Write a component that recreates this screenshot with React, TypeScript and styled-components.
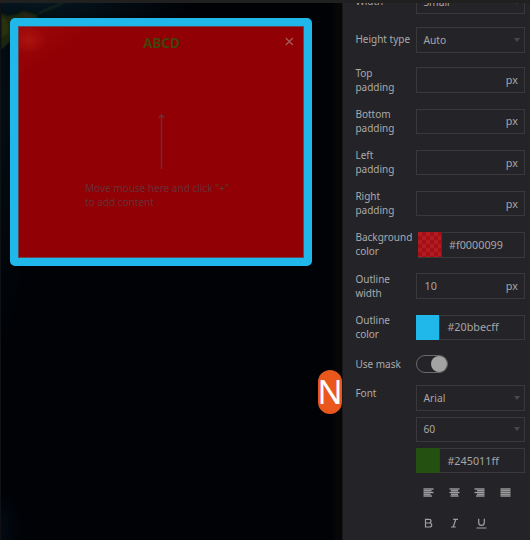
import React from "react";
import styled, { createGlobalStyle } from "styled-components";

const GlobalStyle = createGlobalStyle`
  * { box-sizing: border-box; }
  body { margin: 0; background: #000206; }
`;

const Editor = styled.div`
  width: 530px;
  height: 540px;
  overflow: hidden;
  display: grid;
  grid-template: 3px 537px / 342px 188px;
  font-family: "Noto Sans", sans-serif;
  color: #a3a3a5;
`;

const TopBar = styled.div`
  grid-column: 1 / 3;
  background: #202021;
  z-index: 1;
`;

const Stage = styled.main`
  position: relative;
  isolation: isolate;
  border-left: 1px solid #101115;
  padding: 15px 0 0 9px;
  background:
    linear-gradient(90deg, transparent 331px, #070707 336px),
    radial-gradient(ellipse 150px 32px at 40px 0, #061620, transparent),
    radial-gradient(ellipse 30px 240px at 0 100px, #030e15, transparent),
    radial-gradient(ellipse 20px 35px at 0 525px, #030b13, transparent),
    #000206;
`;

const Terrain = styled.svg`
  position: absolute;
  inset: 0 auto auto 0;
  z-index: -1;
`;

const Popup = styled.section`
  width: 302px;
  height: 248px;
  border: 8px solid #20b8eb;
  border-radius: 5px;
  padding: 8px 9px 0;
  background:
    radial-gradient(ellipse 18px 14px at 11px 14px, rgba(176, 22, 18, 0.8), transparent),
    linear-gradient(145deg, #9d0809, rgba(157, 8, 9, 0) 48px),
    #900004;
  box-shadow: inset 0 0 0 1px #654957;
  display: flex;
  flex-direction: column;
`;

const PopupHeader = styled.header`
  display: grid;
  grid-template-columns: 12px 1fr 12px;
  align-items: center;
  height: 14px;
`;

const PopupTitle = styled.h1`
  grid-column: 2;
  margin: 2px 0 0 1px;
  font-size: 13.3px;
  line-height: 14px;
  font-weight: 700;
  text-align: center;
  color: #46420b;
`;

const DropHint = styled.div`
  display: flex;
  flex-direction: column;
  padding: 66px 0 0 58px;
  color: #683038;
  font-size: 10px;
  line-height: 14px;

  svg { margin: 0 0 12px 71.5px; }
`;

const Badge = styled.div`
  position: absolute;
  left: 317px;
  top: 367px;
  width: 24px;
  height: 44px;
  border-radius: 12px;
  background: #ea571c;
  color: #fff;
  font-size: 33px;
  line-height: 43px;
  display: flex;
  justify-content: center;
`;

const Sidebar = styled.aside`
  background: #242327;
  border-left: 1px solid #19191c;
  padding-left: 12.4px;
  overflow: hidden;
`;

const Settings = styled.div`
  margin-top: -14.2px;
  display: flex;
  flex-direction: column;
  gap: 13px;
`;

const Row = styled.div<{ $height?: number; $top?: boolean }>`
  height: ${(p) => p.$height ?? 28.2}px;
  display: grid;
  grid-template-columns: 61px 108.6px;
  align-items: ${(p) => (p.$top ? "start" : "center")};
`;

const Label = styled.label<{ $nudge?: number }>`
  font-size: 10px;
  line-height: 14px;
  padding-top: ${(p) => p.$nudge ?? 0}px;
  padding-bottom: ${(p) => (p.$nudge ? 0 : 1.2)}px;
  color: #aaaaac;
`;

const Field = styled.div<{ $inset?: number }>`
  height: 25.4px;
  margin-left: ${(p) => p.$inset ?? 0}px;
  border: 1px solid #39393b;
  display: flex;
  align-items: center;
  padding: 0 6px;
  font-size: 10.8px;
  line-height: 16px;
  color: #a6a6a8;
`;

const Select = styled(Field)`
  font-size: 10.3px;
`;

const Unit = styled.span`
  margin-left: auto;
`;

const Chevron = styled.span`
  width: 0;
  height: 0;
  margin: 0 -2.5px 0 auto;
  border: 3.5px solid transparent;
  border-top: 4px solid #48484a;
  border-bottom: 0;
`;

const ColorField = styled(Field)`
  padding-left: 0;
  gap: 7px;
`;

const Swatch = styled.span<{ $color: string; $checked?: boolean }>`
  width: 24px;
  height: 25px;
  margin-left: -1px;
  border-right: 1px solid #39393b;
  background: ${(p) =>
    p.$checked
      ? "repeating-conic-gradient(#a30f14 0 25%, #b01c21 0 50%) 0 0 / 8px 8px"
      : p.$color};
`;

const Toggle = styled.span`
  width: 32px;
  height: 18px;
  border: 1.4px solid #69696b;
  border-radius: 9px;
  display: flex;
  align-items: center;
  justify-content: flex-end;
  margin-top: 0.8px;
`;

const Knob = styled.span`
  width: 16px;
  height: 16px;
  border-radius: 50%;
  background: #a3a3a4;
`;

const FontControls = styled.div`
  display: flex;
  flex-direction: column;
  gap: 5.9px;
`;

const Buttons = styled.div`
  height: 25.4px;
  display: grid;
  grid-template-columns: repeat(4, 25.5px);
  align-items: center;
  justify-items: center;
  color: #a0a0a2;
  margin-left: -0.6px;
`;

const AlignButtons = styled(Buttons)`
  padding-top: 1px;
`;

const StyleButtons = styled(Buttons)`
  grid-template-columns: 25.6px 27px 26px;
`;

const AlignIcon = ({ lines }: { lines: [number, number][] }) => (
  <svg width="11" height="9" viewBox="0 0 11 9" stroke="currentColor" strokeWidth="1.4">
    {lines.map(([from, to], i) => (
      <path key={i} d={`M${from} ${1 + i * 1.75}H${to}`} />
    ))}
  </svg>
);

const alignments: [number, number][][] = [
  [[0.5, 10.5], [0.5, 8.5], [0.5, 10.5], [0.5, 7.5], [0.5, 9]],
  [[0.5, 10.5], [2, 9], [0.5, 10.5], [2, 9], [1.5, 9.5]],
  [[0.5, 10.5], [3, 10.5], [0.5, 10.5], [3, 10.5], [2, 10.5]],
  [[0.5, 10.5], [0.5, 10.5], [0.5, 10.5], [0.5, 10.5], [0.5, 10.5]],
];

const stylePaths = [
  "M2.5 1.3H6Q8 1.3 8 3Q8 5 6 5H2.5ZM2.5 5H6.5Q8.7 5 8.7 7Q8.7 9 6.5 9H2.5Z",
  "M4.2 1.3H9M2 9H6.8M6.8 1.3L4.2 9",
  "M2.7 .7V4.5Q2.7 7.4 5.5 7.4Q8.3 7.4 8.3 4.5V.7M.5 10H10.5",
];

const SelectInput = ({ value }: { value: string }) => (
  <Select>{value}<Chevron /></Select>
);

const ColorInput = ({ value, color, checked, inset }: {
  value: string; color: string; checked?: boolean; inset?: number;
}) => (
  <ColorField $inset={inset}>
    <Swatch $color={color} $checked={checked} />{value}
  </ColorField>
);

export default function App() {
  return (
    <Editor>
      <GlobalStyle />
      <TopBar />
      <Stage>
        <Terrain width="90" height="60" viewBox="0 0 90 60">
          <defs>
            <filter id="soft"><feGaussianBlur stdDeviation="1.3" /></filter>
          </defs>
          <g filter="url(#soft)">
            <path d="M0 10 7 13 14 12 22 8 37 12 35 16H12L9 38 0 47Z" fill="#1d260f" />
            <path d="M0 13 6 17 8 29 0 36Z" fill="#2a3011" />
            <path d="M24 10 34 14 30 17 20 15Z" fill="#2b2114" />
            <path d="M38 10 50 5 62 0" fill="none" stroke="#14251f" strokeWidth="2" />
          </g>
        </Terrain>
        <Popup>
          <PopupHeader>
            <PopupTitle>ABCD</PopupTitle>
            <svg width="12" height="12" viewBox="0 0 12 12" stroke="#a55a5c" strokeWidth="1.3">
              <path d="M2.8 2 9.8 9M9.8 2 2.8 9" />
            </svg>
          </PopupHeader>
          <DropHint>
            <svg width="9" height="55" viewBox="0 0 9 55" fill="none" stroke="#6d3036" strokeWidth="1.4">
              <path d="M4.5 1V55M1.8 3.7 4.5 1 7.2 3.7" />
            </svg>
            <span>Move mouse here and click "+"</span>
            <span>to add content</span>
          </DropHint>
        </Popup>
        <Badge>N</Badge>
      </Stage>
      <Sidebar>
        <Settings>
          <Row $height={25.4}><Label>Width</Label><SelectInput value="Small" /></Row>
          <Row $height={25.4}><Label>Height type</Label><SelectInput value="Auto" /></Row>
          {["Top", "Bottom", "Left", "Right"].map((side) => (
            <Row key={side}>
              <Label>{side}<br />padding</Label>
              <Field><Unit>px</Unit></Field>
            </Row>
          ))}
          <Row>
            <Label>Background color</Label>
            <ColorInput value="#f0000099" color="#b0151a" checked inset={1.6} />
          </Row>
          <Row>
            <Label>Outline<br />width</Label>
            <Field>&#8202;10<Unit>px</Unit></Field>
          </Row>
          <Row>
            <Label>Outline<br />color</Label>
            <ColorInput value="#20bbecff" color="#20b8eb" />
          </Row>
          <Row $height={18.4}>
            <Label $nudge={1}>Use mask</Label>
            <Toggle><Knob /></Toggle>
          </Row>
          <Row $height={151} $top>
            <Label $nudge={1}>Font</Label>
            <FontControls>
              <SelectInput value="Arial" />
              <SelectInput value="60" />
              <ColorInput value="#245011ff" color="#245011" />
              <AlignButtons>
                {alignments.map((lines, i) => <AlignIcon key={i} lines={lines} />)}
              </AlignButtons>
              <StyleButtons>
                {stylePaths.map((d) => (
                  <svg key={d} width="11" height="11" viewBox="0 0 11 11" fill="none" stroke="currentColor" strokeWidth="1.2">
                    <path d={d} />
                  </svg>
                ))}
              </StyleButtons>
            </FontControls>
          </Row>
        </Settings>
      </Sidebar>
    </Editor>
  );
}
